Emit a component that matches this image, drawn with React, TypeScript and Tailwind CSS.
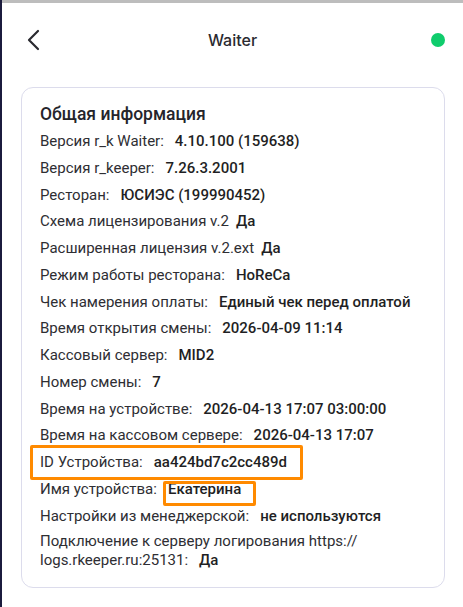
import React from 'react';

interface Row {
  label: string;
  value: string;
  tight?: boolean;
}

const rows: Row[] = [
  { label: 'Версия r_k Waiter:', value: '4.10.100 (159638)' },
  { label: 'Версия r_keeper:', value: '7.26.3.2001' },
  { label: 'Ресторан:', value: 'ЮСИЭС (199990452)' },
  { label: 'Схема лицензирования v.2', value: 'Да', tight: true },
  { label: 'Расширенная лицензия v.2.ext', value: 'Да', tight: true },
  { label: 'Режим работы ресторана:', value: 'HoReCa' },
  { label: 'Чек намерения оплаты:', value: 'Единый чек перед оплатой' },
  { label: 'Время открытия смены:', value: '2026-04-09 11:14' },
  { label: 'Кассовый сервер:', value: 'MID2' },
  { label: 'Номер смены:', value: '7' },
  { label: 'Время на устройстве:', value: '2026-04-13 17:07 03:00:00' },
  { label: 'Время на кассовом сервере:', value: '2026-04-13 17:07' },
  { label: 'ID Устройства:', value: 'aa424bd7c2cc489d' },
  { label: 'Имя устройства:', value: 'Екатерина' },
  { label: 'Настройки из менеджерской:', value: 'не используются' },
];

function InfoRow({ label, value, tight }: Row) {
  return (
    <div className="leading-[20px] text-[15px]">
      <span className="text-[#2e2e33]">{label}</span>
      <span className={`${tight ? 'ml-[7px]' : 'ml-[11px]'} font-medium text-[#1f1f24]`}>{value}</span>
    </div>
  );
}

export default function App() {
  return (
    <div className="w-[463px] h-[607px] bg-white border-l-2 border-[#1b1b3d] overflow-hidden font-['Roboto',sans-serif]">
      <div className="h-[3px] bg-[#bdbdbd]" />

      <div className="grid grid-cols-[60px_1fr_60px] items-center h-[74px]">
        <div className="pl-[25px]">
          <svg width="14" height="22" viewBox="0 0 14 22" fill="none" stroke="#2a2a30" strokeWidth="2.2" strokeLinecap="round" strokeLinejoin="round">
            <path d="M11 2 L2 11 L11 20" />
          </svg>
        </div>
        <span className="text-center text-[16px] font-medium text-[#2a2a30] font-['Inter',sans-serif]">Waiter</span>
        <div className="flex justify-end pr-[18px]">
          <span className="w-[14px] h-[14px] rounded-full bg-[#0fcc6c]" />
        </div>
      </div>

      <div className="relative mr-[18px] ml-[19px] mt-[10px] rounded-[12px] border border-[#dcdcec] pl-[18px] pr-3 pt-[14px] pb-[17px]">
        <h2 className="text-[17.5px] font-medium leading-[24px] text-[#25252b]">Общая информация</h2>
        <div className="mt-[5px] flex flex-col gap-[6.75px]">
          {rows.map((r) => (
            <InfoRow key={r.label} {...r} />
          ))}
          <div className="leading-[19px] text-[15px] text-[#2e2e33]">
            Подключение к серверу логирования https://
            <br />
            logs.rkeeper.ru:25131:
            <span className="ml-[11px] font-medium text-[#1f1f24]">Да</span>
          </div>
        </div>

        <div className="absolute left-[8px] top-[357px] w-[273px] h-[35px] border-[3px] border-[#ff8a00] rounded-[2px]" />
        <div className="absolute left-[141px] top-[393px] w-[93px] h-[25px] border-[3px] border-[#ff8a00] rounded-[2px]" />
      </div>
    </div>
  );
}
